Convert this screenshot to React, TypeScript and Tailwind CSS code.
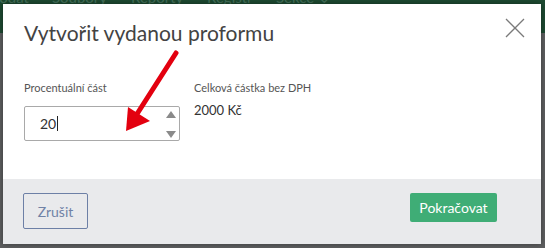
import React from 'react';

export default function App() {
  return (
    <div className="relative w-[545px] h-[248px] overflow-hidden bg-[#5e5f60] font-['Lato','Liberation_Sans',sans-serif]">
      {/* dimmed app behind the dialog */}
      <div className="absolute left-0 top-0 w-full h-[33px] bg-[#1d4a31] flex items-start text-[15px] text-[#44705a] leading-none">
        <div className="flex -mt-[10px] -ml-[12px]">
          <span className="w-[64px]">Dodáť</span>
          <span className="w-[79px]">Soubory</span>
          <span className="w-[76px]">Reporty</span>
          <span className="w-[69px]">Registr</span>
          <span>Sekce ⌄</span>
        </div>
      </div>

      <div className="relative pt-[4px] pl-[3px]">
        <div className="w-[538px] h-[240px] bg-white flex flex-col shadow-[0_0_6px_rgba(0,0,0,0.4)]">
          <div className="flex items-start justify-between pl-[21px] pr-[16px] pt-[15px] h-[78px]">
            <h1 className="text-[21px] leading-[28px] text-[#434343]">Vytvořit vydanou proformu</h1>
            <button className="w-[20px] h-[20px] mt-[-1px]">
              <svg width="20" height="20" viewBox="0 0 20 20">
                <path d="M1 1 L19 19 M19 1 L1 19" stroke="#7a7a7a" strokeWidth="1.3" />
              </svg>
            </button>
          </div>

          <div className="flex gap-[14px] pl-[21px] h-[97px]">
            <div className="flex flex-col w-[156px]">
              <label className="text-[11px] leading-[14px] text-[#555] mb-[11px] mt-[-1px]">Procentuální část</label>
              <div className="relative h-[35px] border border-[#a9a9a9] rounded-[2px] flex items-center pl-[15px]">
                <span className="text-[14px] text-[#333]">20</span>
                <span className="w-[1px] h-[15px] bg-[#222] ml-[1px]" />
                <div className="absolute right-[3px] top-[4px] flex flex-col justify-between h-[27px]">
                  <svg width="10" height="7" viewBox="0 0 10 7"><path d="M5 0 L10 7 L0 7 Z" fill="#8a8a8a" /></svg>
                  <svg width="10" height="7" viewBox="0 0 10 7"><path d="M0 0 L10 0 L5 7 Z" fill="#8a8a8a" /></svg>
                </div>
              </div>
            </div>
            <div className="flex flex-col">
              <span className="text-[11px] leading-[14px] text-[#555] mb-[6px] mt-[-1px]">Celková částka bez DPH</span>
              <span className="text-[13px] leading-[18px] text-[#333]">2000 Kč</span>
            </div>
          </div>

          <div className="flex-1 bg-[#e9eaec] flex items-start justify-between pl-[20px] pr-[44px] pt-[14px]">
            <button className="w-[65px] h-[36px] border border-[#6d80a6] rounded-[2px] text-[14px] text-[#7082a6]">Zrušit</button>
            <button className="w-[87px] h-[29px] bg-[#3fad76] rounded-[2px] text-[14px] text-white">Pokračovat</button>
          </div>
        </div>
      </div>

      {/* annotation arrow */}
      <svg className="absolute left-0 top-0 pointer-events-none" width="545" height="248" viewBox="0 0 545 248">
        <path d="M176 53 L137 114" stroke="#e3000f" strokeWidth="5" strokeLinecap="round" />
        <path d="M126 131 L128 107 L150 121 Z" fill="#e3000f" />
      </svg>
    </div>
  );
}
